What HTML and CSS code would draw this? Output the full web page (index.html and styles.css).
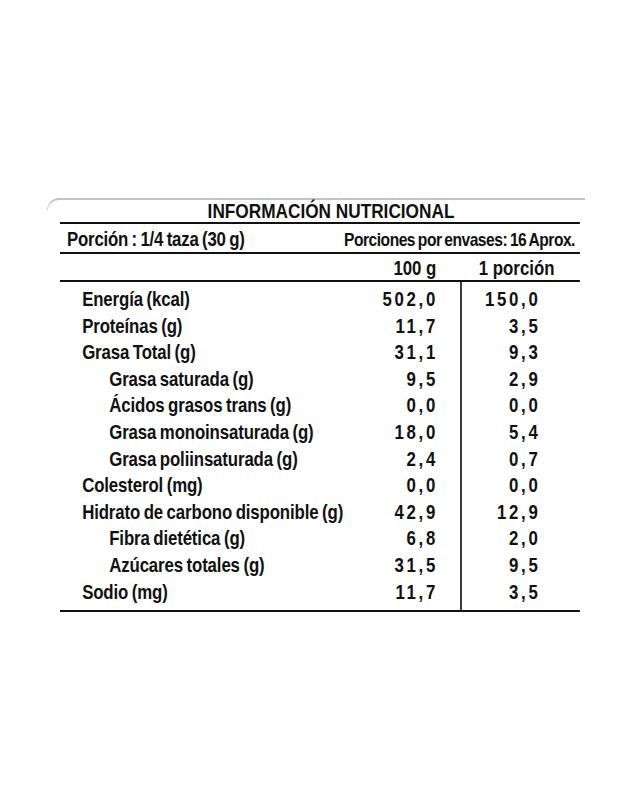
FILE: index.html
```html
<!DOCTYPE html>
<html lang="es">
<head>
<meta charset="utf-8">
<title>Información nutricional</title>
<link rel="stylesheet" href="styles.css">
</head>
<body>
<div class="label">
  <div class="edge"></div>
  <div class="panel">
    <div class="title">INFORMACIÓN NUTRICIONAL</div>
    <div class="serving">
      <span class="serving-size">Porción : 1/4 taza (30 g)</span>
      <span class="serving-count">Porciones por envases: 16 Aprox.</span>
    </div>
    <div class="head">
      <span></span>
      <span class="h1">100 g</span>
      <span class="h2">1 porción</span>
    </div>
    <div class="body">
      <div class="row"><span class="name">Energía (kcal)</span><span class="v1">502,0</span><span class="v2">150,0</span></div>
      <div class="row"><span class="name">Proteínas (g)</span><span class="v1">11,7</span><span class="v2">3,5</span></div>
      <div class="row"><span class="name">Grasa Total (g)</span><span class="v1">31,1</span><span class="v2">9,3</span></div>
      <div class="row"><span class="name sub">Grasa saturada (g)</span><span class="v1">9,5</span><span class="v2">2,9</span></div>
      <div class="row"><span class="name sub">Ácidos grasos trans (g)</span><span class="v1">0,0</span><span class="v2">0,0</span></div>
      <div class="row"><span class="name sub">Grasa monoinsaturada (g)</span><span class="v1">18,0</span><span class="v2">5,4</span></div>
      <div class="row"><span class="name sub">Grasa poliinsaturada (g)</span><span class="v1">2,4</span><span class="v2">0,7</span></div>
      <div class="row"><span class="name">Colesterol (mg)</span><span class="v1">0,0</span><span class="v2">0,0</span></div>
      <div class="row"><span class="name">Hidrato de carbono disponible (g)</span><span class="v1">42,9</span><span class="v2">12,9</span></div>
      <div class="row"><span class="name sub">Fibra dietética (g)</span><span class="v1">6,8</span><span class="v2">2,0</span></div>
      <div class="row"><span class="name sub">Azúcares totales (g)</span><span class="v1">31,5</span><span class="v2">9,5</span></div>
      <div class="row"><span class="name">Sodio (mg)</span><span class="v1">11,7</span><span class="v2">3,5</span></div>
    </div>
  </div>
</div>
</body>
</html>
```
FILE: styles.css
```css
html, body {
  margin: 0;
  padding: 0;
  background: #ffffff;
}
html {
  overflow-x: hidden;
}
body {
  font-family: "Liberation Sans", Arial, sans-serif;
  font-weight: bold;
  color: #111111;
  font-size: 20.5px;
}
.label {
  margin: 198px 0 0 47px;
  width: 538px;
}
.edge {
  height: 10px;
  border-top: 2px solid #c4c4c4;
  border-left: 1px solid #d6d6d6;
  border-top-left-radius: 12px;
  margin-bottom: -12px;
}
/* condensed type: the panel is laid out at full width and narrowed to 82% */
.panel {
  margin-left: 13px;
  width: 634px;
  transform: scaleX(0.82);
  transform-origin: left top;
}
.title {
  font-size: 21px;
  line-height: 22px;
  padding-left: 180px;
  padding-top: 2px;
  border-bottom: 2px solid #111;
}
.serving {
  display: flex;
  justify-content: space-between;
  align-items: baseline;
  padding: 3px 6px 0 8.5px;
  line-height: 24px;
  border-bottom: 2px solid #111;
  white-space: nowrap;
  word-spacing: -1.2px;
}
.serving-size {
  letter-spacing: -0.25px;
}
.serving-count {
  font-size: 19px;
  letter-spacing: -0.6px;
}
.head {
  display: grid;
  grid-template-columns: 1fr 122px 146px;
  padding-top: 2px;
  line-height: 24px;
  border-bottom: 2px solid #111;
}
.h1 {
  text-align: right;
  padding-right: 29px;
}
.h2 {
  text-align: right;
  padding-right: 31px;
  white-space: nowrap;
}
.body {
  border-bottom: 2px solid #111;
}
.row {
  display: grid;
  grid-template-columns: 1fr 122px 146px;
  line-height: 26.6px;
}
.row:first-child > * {
  padding-top: 4px;
}
.row:last-child > * {
  padding-bottom: 5px;
}
.name {
  padding-left: 27px;
  white-space: nowrap;
  word-spacing: -1.2px;
  letter-spacing: -0.15px;
}
.name.sub {
  padding-left: 60px;
}
.v1, .v2 {
  text-align: right;
  letter-spacing: 3.3px;
}
.v1 {
  padding-right: 27px;
}
.v2 {
  border-left: 2.4px solid #111;
  padding-right: 48px;
}
```
